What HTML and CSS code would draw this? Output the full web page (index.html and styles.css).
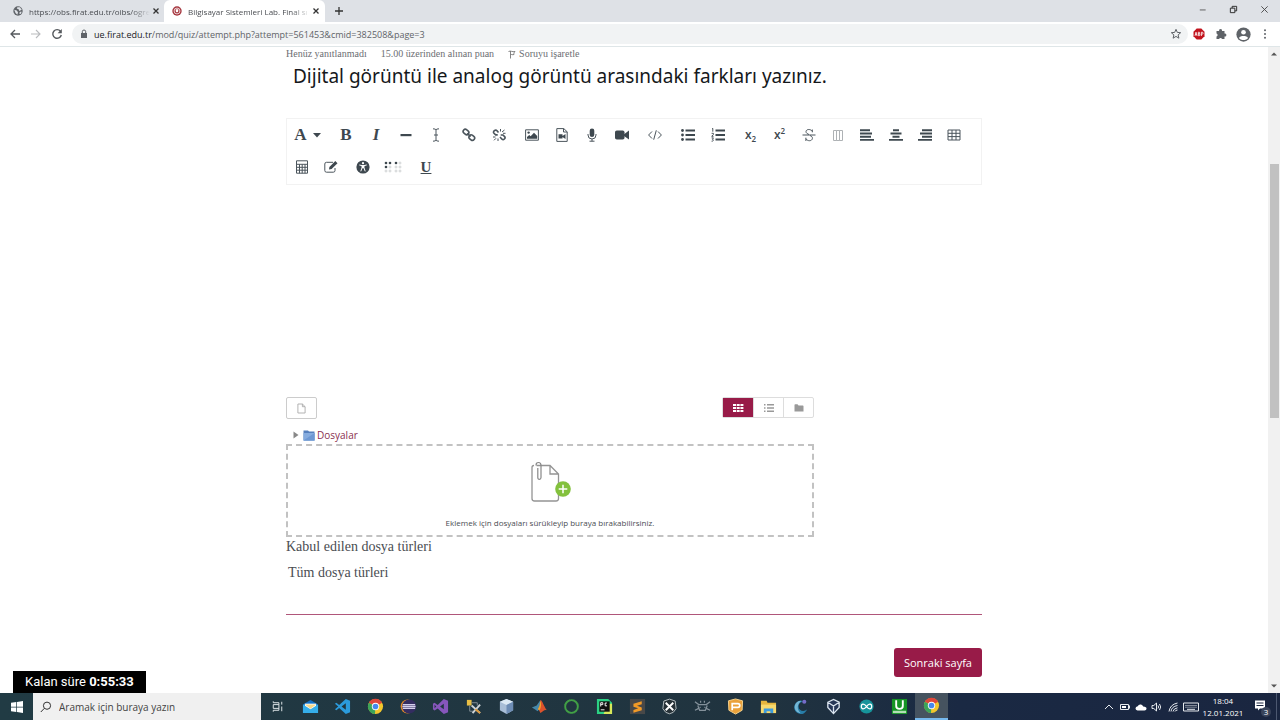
FILE: index.html
```html
<!DOCTYPE html>
<html lang="tr">
<head>
<meta charset="utf-8">
<meta name="viewport" content="width=device-width, initial-scale=1">
<title>Bilgisayar Sistemleri Lab. Final sınavı</title>
<link rel="stylesheet" href="styles.css">
</head>
<body>
<header class="titlebar">
  <div class="tab">
    <svg class="favicon" viewBox="0 0 16 16"><circle cx="8" cy="8" r="7.5" fill="#5f6368"/><path d="M2 6l4 1 2 3-1 4-3-3zM7 2l4 0 3 4-4 2-1-3-3-1zM11 9l3 0-2 4-2-1z" fill="#dee1e6"/></svg>
    <span class="tab-title">https://obs.firat.edu.tr/oibs/ogre</span>
    <button class="tab-close" aria-label="Sekmeyi kapat"><svg viewBox="0 0 8 8"><path d="M1.5 1.5l5 5m0-5l-5 5" stroke="#333" stroke-width="1.3"/></svg></button>
  </div>
  <div class="tab tab-active">
    <svg class="favicon" viewBox="0 0 16 16"><circle cx="8" cy="8" r="7.5" fill="#a63840"/><circle cx="8" cy="8" r="4.7" fill="none" stroke="#fff" stroke-width="1.2"/><path d="M6 5h4v3a2 2 0 0 1-4 0z" fill="#fff"/></svg>
    <span class="tab-title">Bilgisayar Sistemleri Lab. Final sı</span>
    <button class="tab-close" aria-label="Sekmeyi kapat"><svg viewBox="0 0 8 8"><path d="M1.5 1.5l5 5m0-5l-5 5" stroke="#333" stroke-width="1.3"/></svg></button>
  </div>
  <button class="new-tab" aria-label="Yeni sekme"><svg viewBox="0 0 10 10"><path d="M5 1v8M1 5h8" stroke="#333" stroke-width="1.3"/></svg></button>
  <div class="window-buttons">
    <button aria-label="Küçült"><svg viewBox="0 0 10 10"><path d="M2 5.5h6.500" stroke="#555"/></svg></button>
    <button aria-label="Geri yükle"><svg viewBox="0 0 10 10"><path d="M1.500 3.500h5v5h-5zM3.500 3.500v-2h5v5h-2" fill="none" stroke="#222"/></svg></button>
    <button aria-label="Kapat"><svg viewBox="0 0 10 10"><path d="M1.500 1.500l7 7m0-7l-7 7" stroke="#444"/></svg></button>
  </div>
</header>

<nav class="addressbar">
  <button class="nav-button" aria-label="Geri"><svg viewBox="0 0 12 12"><path d="M11 6H2M6 2L2 6l4 4" fill="none" stroke="#55595d" stroke-width="1.3"/></svg></button>
  <button class="nav-button" aria-label="İleri"><svg viewBox="0 0 12 12"><path d="M1 6h9M6 2l4 4-4 4" fill="none" stroke="#b9bbbe" stroke-width="1.1"/></svg></button>
  <button class="nav-button" aria-label="Yenile"><svg viewBox="0 0 12 12"><path d="M9.500 3.300A4.300 4.300 0 1 0 10.300 7" fill="none" stroke="#55595d" stroke-width="1.4"/><path d="M10.800 1v4.200H6.600z" fill="#55595d"/></svg></button>
  <div class="omnibox">
    <svg class="lock" viewBox="0 0 8 10"><path d="M1 4h6v5H1z" fill="#5f6368"/><path d="M2.300 4V2.700a1.700 1.700 0 0 1 3.400 0V4" fill="none" stroke="#5f6368"/></svg>
    <div class="url" role="textbox" aria-label="Adres çubuğu"><span class="url-host">ue.firat.edu.tr</span>/mod/quiz/attempt.php?attempt=561453&amp;cmid=382508&amp;page=3</div>
    <svg class="star" viewBox="0 0 12 12"><path d="M6 1.300l1.300 3.100 3.400.3-2.600 2.200.8 3.300L6 8.400l-2.900 1.800.8-3.300L1.300 4.700l3.400-.3z" fill="none" stroke="#5f6368"/></svg>
  </div>
  <div class="extensions">
    <button aria-label="Adblock Plus"><svg viewBox="0 0 12 12"><path d="M3.700.5h4.600l3.200 3.200v4.600l-3.200 3.200H3.700L.5 8.300V3.700z" fill="#c2131d"/><path d="M2 7.800l1-3.600 1 3.600M2.300 6.700h1.400M5.300 4.200v3.500h.8a.9.9 0 0 0 0-1.800h-.8.700a.8.800 0 0 0 0-1.700zM8.400 8V4.200h.7a1 1 0 0 1 0 2h-.7" fill="none" stroke="#fff" stroke-width=".8"/></svg></button>
    <button aria-label="Uzantılar"><svg viewBox="0 0 12 12"><path d="M1.500 3h2.600a1.500 1.500 0 1 1 2.900 0h2.500v2.500a1.500 1.500 0 1 1 0 2.900V11H7a1.500 1.500 0 0 0-2.900 0H1.500V8.400a1.500 1.500 0 0 0 0-2.900z" fill="#5f6368"/></svg></button>
    <button class="profile" aria-label="Profil"><svg viewBox="0 0 16 16"><circle cx="8" cy="8" r="7.600" fill="#5f6368"/><circle cx="8" cy="5.600" r="2.500" fill="#fff"/><path d="M3.200 11.600c1.200-2.800 8.400-2.800 9.600 0-2 3-7.600 3-9.600 0z" fill="#fff"/></svg></button>
    <button aria-label="Menü"><svg viewBox="0 0 12 12"><g fill="#5f6368"><circle cx="6" cy="2.200" r="1"/><circle cx="6" cy="6" r="1"/><circle cx="6" cy="9.800" r="1"/></g></svg></button>
  </div>
</nav>

<div class="viewport">
  <main class="page">
    <article class="question">
      <div class="question-info">
        <span>Henüz yanıtlanmadı</span>
        <span>15.00 üzerinden alınan puan</span>
        <a class="flag" href="#"><svg viewBox="0 0 8 10"><path d="M2.500 2v7.500M.5 2.500c2.500-1.200 3.500.8 6.500 0-1 .8-1.300 2.200-1 3-1.500.6-2.500-.3-3.500 0" fill="none" stroke="#777" stroke-width=".9"/></svg>Soruyu işaretle</a>
      </div>
      <h1 class="question-text">Dijital görüntü ile analog görüntü arasındaki farkları yazınız.</h1>

      <div class="editor-toolbar" role="toolbar" aria-label="Metin düzenleyici">
        <div class="group style-group"><button aria-label="Paragraf stilleri"><span class="glyph">A</span><svg class="caret" viewBox="0 0 8 5"><path d="M0 0h8L4 4.500z"/></svg></button></div>
        <div class="group">
          <button aria-label="Kalın"><span class="glyph">B</span></button>
          <button aria-label="İtalik"><span class="glyph italic">I</span></button>
          <button aria-label="Yatay çizgi"><svg viewBox="0 0 14 14"><path d="M1.500 6h11v2.200h-11z"/></svg></button>
          <button aria-label="İmleç"><svg viewBox="0 0 14 14"><path d="M4 .8q3 0 3 1.200 0-1.200 3-1.200M7 2v10M4 13.200q3 0 3-1.200 0 1.200 3 1.200M5 7h4" class="line"/></svg></button>
        </div>
        <div class="group">
          <button aria-label="Bağlantı"><svg viewBox="0 0 14 14"><g class="line bold"><rect x="1" y="1.800" width="6" height="4.400" rx="2.200" transform="rotate(40 4 4)"/><rect x="6.800" y="7.400" width="6" height="4.400" rx="2.200" transform="rotate(40 9.800 9.600)"/><path d="M5.200 5.200l3.400 3.400"/></g></svg></button>
          <button aria-label="Bağlantıyı kaldır"><svg viewBox="0 0 14 14"><path d="M6.500 4.500L5 2.700C3.500 1 .5 3.500 2 5.300l1.700 1.600h2M8 9l2 2.200c1.500 1.400 4-1 2.600-2.600L11 7H8.700" class="line bold"/><path d="M8.500 1v2.500M10 4l2.500-2M11 5.300h2.500M1 9h2.500M2 12.300l2-2M6 10.500V13" class="line thin"/></svg></button>
        </div>
        <div class="group">
          <button aria-label="Resim"><svg viewBox="0 0 14 14"><path d="M.6 1.800h12.800v10.400H.6z" class="line"/><path d="M2 10.800V8.900l2.200-2 1.500 1.400L9 4.800l3.200 3.200v2.800z"/><circle cx="3.600" cy="4.600" r="1.200"/></svg></button>
          <button aria-label="Medya"><svg viewBox="0 0 14 14"><path d="M1.800.6h7l3.400 3.200v9.600H1.800zM8.500.6V4h3.700" class="line"/><path d="M3.500 6.200h4v4.300h-4zM7.500 8l3-2v5l-3-2z"/></svg></button>
          <button aria-label="Ses kaydet"><svg viewBox="0 0 14 14"><rect x="4.700" y=".5" width="4.600" height="8.500" rx="2.300"/><path d="M3 6v1a4 4 0 0 0 8 0V6M7 11v2.300M4.500 13.200h5" class="line"/></svg></button>
          <button aria-label="Video kaydet"><svg viewBox="0 0 14 14"><rect x="0" y="2.500" width="9.500" height="9" rx="1.800"/><path d="M9 6.200l5-3.600v9L9 8z"/></svg></button>
        </div>
        <div class="group"><button aria-label="HTML"><svg viewBox="0 0 14 14"><path d="M4 3.500L.6 7 4 10.500M10 3.500L13.400 7 10 10.500M8.300 2.300l-2.600 9.400" class="line"/></svg></button></div>
        <div class="group">
          <button aria-label="Madde listesi"><svg viewBox="0 0 14 14"><circle cx="1.500" cy="2.500" r="1.400"/><circle cx="1.500" cy="7" r="1.400"/><circle cx="1.500" cy="11.500" r="1.400"/><path d="M4.500 1.600H14v1.800H4.500zM4.500 6.100H14v1.800H4.500zM4.500 10.600H14v1.800H4.500z"/></svg></button>
          <button aria-label="Numaralı liste"><svg viewBox="0 0 14 14"><path d="M1 .8l.8-.4v3.300M.6 5.300h1.800v1.200L.7 8.300h1.800M.6 9.900h1.800L1.500 11.400c1.400 0 1.200 2-.9 1.800" class="line thin"/><path d="M4.500 1.600H14v1.800H4.500zM4.500 6.100H14v1.800H4.500zM4.500 10.600H14v1.800H4.500z"/></svg></button>
        </div>
        <div class="group compact">
          <button aria-label="Alt simge"><span class="script">x<sub>2</sub></span></button>
          <button aria-label="Üst simge"><span class="script">x<sup>2</sup></span></button>
          <button aria-label="Üstü çizili"><svg viewBox="0 0 14 14"><path d="M10.300 4.300V1.500M10.200 3.300C9 1 4.300.7 4 3.600c0 1.500 1.500 2.300 3 2.900M8 7.500c1.600.7 2.600 1.500 2.400 3-.6 3-5 2.800-6.400.3M3.900 9.700V13M.5 7h13" class="line"/></svg></button>
          <button aria-label="Sütunlar"><svg viewBox="0 0 14 14"><path d="M2.500 2.500h3v10h-3zM5.500 2.500h3v10h-3zM8.500 2.500h3v10h-3z" class="line pale"/></svg></button>
          <button aria-label="Sola hizala"><svg viewBox="0 0 14 14"><path d="M0 1.300h10v2H0zM0 4.500h12v2H0zM0 7.700h11v2H0zM0 10.900h14v1.800H0z"/></svg></button>
          <button aria-label="Ortala"><svg viewBox="0 0 14 14"><path d="M4 1.300h6v2H4zM1.500 4.500h11v2h-11zM3.500 7.700h7v2h-7zM0 10.900h14v1.800H0z"/></svg></button>
          <button aria-label="Sağa hizala"><svg viewBox="0 0 14 14"><path d="M4 1.300h10v2H4zM2 4.500h12v2H2zM4 7.700h10v2H4zM0 10.900h14v1.800H0z"/></svg></button>
          <button aria-label="Tablo"><svg viewBox="0 0 14 14"><path d="M1 2h12v10H1zM1 5.300h12M1 8.600h12M5 2v10M9 2v10" class="line"/></svg></button>
        </div>
        <div class="group compact">
          <button aria-label="Denklem"><svg viewBox="0 0 14 14"><path d="M1.500.8h11v12.400h-11zM1.500 4.300h11M1.500 7.300h11M1.500 10.200h11M4.500 4.300v9M7.200 4.300v9M10 4.300v9" class="line"/></svg></button>
          <button aria-label="Düzenle"><svg viewBox="0 0 14 14"><path d="M11 8v2.500q0 1.700-1.700 1.700H2.500Q.8 12.200.8 10.500V4q0-1.700 1.700-1.700H9" class="line"/><path d="M5 9.500l.4-2.600L11.300 1l2.200 2.200-5.900 5.900z"/></svg></button>
        </div>
        <div class="group">
          <button aria-label="Erişilebilirlik denetimi"><svg viewBox="0 0 14 14"><circle cx="7" cy="7" r="6.600"/><circle cx="7" cy="3.200" r="1.100" fill="#fff"/><path d="M3.300 5l2.700.6v2.200l-1.200 3.500M10.700 5L8 5.600v2.200l1.200 3.500M6 5.600h2" fill="none" stroke="#fff"/><path d="M6 5.300h2v3H6z" fill="#fff"/></svg></button>
          <button aria-label="Ekran okuyucu"><svg class="wide" viewBox="0 0 18 14"><circle cx="2" cy="3" r="1.300"/><circle cx="6" cy="3" r="1.300"/><circle cx="2" cy="7" r="1.300"/><circle cx="12" cy="3" r="1.300"/><g fill="none" stroke="#b9bdc0" stroke-width=".6"><circle cx="6" cy="7" r="1"/><circle cx="2" cy="11" r="1"/><circle cx="6" cy="11" r="1"/><circle cx="16" cy="3" r="1"/><circle cx="12" cy="7" r="1"/><circle cx="16" cy="7" r="1"/><circle cx="12" cy="11" r="1"/><circle cx="16" cy="11" r="1"/></g></svg></button>
        </div>
        <div class="group"><button aria-label="Altı çizili"><span class="glyph underline">U</span></button></div>
      </div>
      <textarea class="answer" aria-label="Yanıt metni"></textarea>

      <section class="file-manager" aria-label="Dosyalar">
        <div class="file-toolbar">
          <button class="add-file" aria-label="Dosya ekle"><svg viewBox="0 0 10 12"><path d="M1 1h5l3 3v7H1zM6 1v3h3" fill="none" stroke="#aaa"/></svg></button>
          <div class="view-switch">
            <button class="selected" aria-label="Simge görünümü"><svg viewBox="0 0 12 10"><path d="M1 1h3v2H1zM4.700 1h3v2h-3zM8.400 1h3v2h-3zM1 4h3v2H1zM4.700 4h3v2h-3zM8.400 4h3v2h-3zM1 7h3v2H1zM4.700 7h3v2h-3zM8.400 7h3v2h-3z" fill="#fff"/></svg></button>
            <button aria-label="Liste görünümü"><svg viewBox="0 0 12 10"><path d="M1 1h1.500v1.500H1zM1 4.200h1.500v1.500H1zM1 7.400h1.500v1.500H1zM4 1h7v1.500H4zM4 4.200h7v1.500H4zM4 7.400h7v1.500H4z" fill="#999"/></svg></button>
            <button aria-label="Ağaç görünümü"><svg viewBox="0 0 12 10"><path d="M1.500 2q0-.7.7-.7h2.300l1 1.200h4.300q.7 0 .7.700v5.300h-9z" fill="#999"/></svg></button>
          </div>
        </div>
        <div class="path">
          <svg class="arrow" viewBox="0 0 6 8"><path d="M.5.500L5.500 4 .5 7.500z" fill="#888"/></svg>
          <svg class="folder" viewBox="0 0 12 12"><path d="M.5 1.500H5l1 1h5.500v9H.5z" fill="#5680bd"/><path d="M.5 4h11v7.500H.5z" fill="#86acdf"/><path d="M.5 11.500L11.500 4v7.500z" fill="#6d98d4"/></svg>
          <a href="#">Dosyalar</a>
        </div>
        <div class="dropzone">
          <svg class="drop-icon" viewBox="0 0 42 42"><path d="M7.500 4.500H21L29.500 13v24.500q0 2.500-2.500 2.500H5.500Q3 40 3 37.500v-31q0-2 2-2M21 4.500V13h8.500" fill="none" stroke="#949494" stroke-width="1.300"/><path d="M7 4.500q0-3 2.500-3T12 4.500v12q0 1.800-1.600 1.800T8.800 16.500V7" fill="none" stroke="#888" stroke-width="1.200"/><circle cx="34" cy="28" r="7.800" fill="#83c13d"/><path d="M34 23.700v8.600M29.700 28h8.600" stroke="#fff" stroke-width="1.500"/></svg>
          <p>Eklemek için dosyaları sürükleyip buraya bırakabilirsiniz.</p>
        </div>
      </section>
      <div class="accepted">
        <p>Kabul edilen dosya türleri</p>
        <p class="all-types">Tüm dosya türleri</p>
      </div>
      <div class="submit-row"><button class="next">Sonraki sayfa</button></div>
    </article>
  </main>
  <div class="scrollbar" aria-hidden="true">
    <svg viewBox="0 0 8 6"><path d="M1 4.500h6L4 1.500z" fill="#555"/></svg>
    <div class="track"><div class="thumb"></div></div>
    <svg viewBox="0 0 8 6"><path d="M1 1.500h6L4 4.500z" fill="#555"/></svg>
  </div>
  <div class="timer">Kalan süre <strong>0:55:33</strong></div>
</div>

<footer class="taskbar">
  <button class="start" aria-label="Başlat"><svg viewBox="0 0 12 12"><path d="M0 1.800l5.300-.8v4.700H0zM6 .9L12 0v5.700H6zM0 6.400h5.300v4.700L0 10.300zM6 6.400h6V12l-6-.9z" fill="#fff"/></svg></button>
  <label class="search">
    <svg viewBox="0 0 12 12"><circle cx="7" cy="4.700" r="3.600" fill="none" stroke="#333"/><path d="M4.300 7.400L.8 11" stroke="#333"/></svg>
    <input type="text" placeholder="Aramak için buraya yazın" aria-label="Arama">
  </label>
  <div class="apps">
    <button aria-label="Görev görünümü"><svg viewBox="0 0 18 18"><path d="M4.500 5h6v2M4.500 13h6v-2M4.500 7v4h6V7zM4.500 3.500V5M4.500 13v1.500M13.500 4v3M13.500 9v5" fill="none" stroke="#e8eef0"/></svg></button>
    <button aria-label="Posta"><svg viewBox="0 0 18 18"><path d="M1 7l8-5 8 5v9H1z" fill="#1170c8"/><path d="M3 6h12v8H3z" fill="#fff"/><path d="M1 7l8 5 8-5v9H1z" fill="#35aeea"/><path d="M3 7h12l-6 4.500z" fill="#f4d88c"/></svg></button>
    <button aria-label="Visual Studio Code"><svg viewBox="0 0 18 18"><path d="M12.500 1L17 3v12l-4.500 2L5.500 10.500 2.500 13 1 12l3.500-3L1 6l1.500-1 3 2.500z" fill="#2b9bdc"/><path d="M12.500 5.500V12.500L8 9z" fill="#20363f"/></svg></button>
    <button aria-label="Chrome"><svg viewBox="0 0 18 18"><circle cx="9" cy="9" r="8" fill="#f3c72c"/><path d="M9 9L2 5A8 8 0 0 1 16 5z" fill="#df473b"/><path d="M9 9L2 5a8 8 0 0 0 6.500 12z" fill="#3ba45a"/><circle cx="9" cy="9" r="3.900" fill="#fff"/><circle cx="9" cy="9" r="3" fill="#4688ed"/></svg></button>
    <button aria-label="Eclipse"><svg viewBox="0 0 18 18"><circle cx="8" cy="9" r="7.300" fill="#e68b28"/><circle cx="9.700" cy="9" r="7.500" fill="#342d61"/><path d="M3 7h13M2.500 9h14M3 11h13" stroke="#d4cfeb" stroke-width="1.400"/></svg></button>
    <button aria-label="Visual Studio"><svg viewBox="0 0 18 18"><path d="M12.500 1L17 3v12l-4.500 2L6 11l-3.300 2.300L1 12V6l1.700-1L6 7.500zM2.700 7.200v3.600L4.500 9zM12.500 6v6L8.500 9z" fill="#8756bc" fill-rule="evenodd"/></svg></button>
    <button aria-label="SQL Server"><svg viewBox="0 0 18 18"><path d="M2 2h5v6H2z" fill="#e9bf44"/><path d="M7 5h6v3M5 8v6h5" stroke="#879097" fill="none"/><path d="M7 8l9 8M16 7l-8 9" stroke="#ced3d7" stroke-width="2"/><path d="M11 12l5 4" stroke="#db9a3d" stroke-width="2"/></svg></button>
    <button aria-label="VirtualBox"><svg viewBox="0 0 18 18"><path d="M9 1l7 3v9l-7 4-7-4V4z" fill="#a8bdd6"/><path d="M9 1l7 3-7 3.500L2 4z" fill="#dce9f4"/><path d="M9 7.500L16 4v9l-7 4z" fill="#6e8db5"/></svg></button>
    <button aria-label="MATLAB"><svg viewBox="0 0 18 18"><path d="M1 10l5-2 4-6 1 7-4 5-3-2z" fill="#4689ac"/><path d="M10 2c2 0 4 8 7 11-3-1-4 1-7 3l-2-4c2-3 1-6 2-10z" fill="#dc522c"/><path d="M10 3c1 3 1 7-1 10l-2-1c3-4 2-6 3-9z" fill="#f0a22d"/></svg></button>
    <button aria-label="Anaconda"><svg viewBox="0 0 18 18"><circle cx="9" cy="9" r="6.700" fill="none" stroke="#43a047" stroke-width="2"/><circle cx="9" cy="9" r="7.500" fill="none" stroke="#358c3b" stroke-dasharray="1 1.500"/></svg></button>
    <button aria-label="PyCharm"><svg viewBox="0 0 18 18"><path d="M1 1h12l4 4v12H1z" fill="#2bd184"/><path d="M13 6h4v11H8z" fill="#d8e75a"/><path d="M3.500 3.500h11v11h-11z" fill="#111"/><path d="M5 9V5h2.200v2H5M11.500 5.300H9.700v3h2M5 12.500h4" fill="none" stroke="#fff"/></svg></button>
    <button aria-label="Sublime Text"><svg viewBox="0 0 18 18"><path d="M1 1h16v16H1z" fill="#484848"/><path d="M13.500 3.500v3.200L8.500 8.300l5 1.700v3L4.700 15.600v-3l5-1.700-5-1.700V6.200z" fill="#f29a27"/></svg></button>
    <button aria-label="Xilinx"><svg viewBox="0 0 18 18"><path d="M9 1.200l6 2 1 8-3 4-4 1.500-4-1.500-3-4 1-8z" fill="#263137" stroke="#bac2c5"/><path d="M5 5l8 8M13 5l-8 8" stroke="#fff" stroke-width="2"/></svg></button>
    <button aria-label="Robot"><svg viewBox="0 0 18 18"><path d="M1 4l4 3h8l4-3M1 13l4-2M17 13l-4-2M4 8l2 5h6l2-5M6 10h1M11 10h1M7 5V3M11 5V3" fill="none" stroke="#84919b" stroke-width="1.300"/></svg></button>
    <button aria-label="Proteus"><svg viewBox="0 0 18 18"><path d="M1.500 3L9 1l7.500 2-.5 10-7 4-7-4z" fill="#eaa13a" stroke="#f8d48e"/><path d="M5.500 13V6h6q2 0 2 2t-2 2h-6" fill="none" stroke="#fff" stroke-width="1.800"/></svg></button>
    <button aria-label="Dosya Gezgini"><svg viewBox="0 0 18 18"><path d="M1 3h6l1 2h9v11H1z" fill="#e5b63f"/><path d="M1 7h16v9H1z" fill="#f6d96e"/><path d="M4 16v-5h10v5h-3v-2H7v2z" fill="#3d9bdc"/></svg></button>
    <button aria-label="Cisco"><svg viewBox="0 0 18 18"><path d="M10 3a7 7 0 1 0 6 9c-3 3-9 2-9-3 0-3 1-4 4-5z" fill="#287da8"/><path d="M10 3a7 7 0 0 0-7 5c-1 5 3 8 6 8-4-4-4-9 1-13z" fill="#73b6d5"/><circle cx="13" cy="4" r="2.200" fill="#756cca"/></svg></button>
    <button aria-label="Sanal makine"><svg viewBox="0 0 18 18"><path d="M3 4v6l6 6 6-6V4L9 1.500z" fill="#253657"/><path d="M3 4.500l6-3 6 3v5.500l-6 6.500L3 10zM3 4.500l6 4 6-4M9 8.500v8" fill="none" stroke="#dbe5ef" stroke-width="1.400"/></svg></button>
    <button aria-label="Arduino"><svg viewBox="0 0 18 18"><circle cx="9" cy="9" r="7.500" fill="#16949b"/><path d="M9 9C6.500 5.500 3.500 6 3.500 9s3 3.500 5.500 0 5.500-3 5.500 0-3 3.500-5.500 0z" fill="none" stroke="#fff" stroke-width="1.300"/></svg></button>
    <button aria-label="Uyumsoft"><svg viewBox="0 0 18 18"><path d="M1 1h16v16H1z" fill="#159425"/><path d="M5.500 2.500v6q0 3 3.500 3t3.500-3v-6" fill="none" stroke="#fff" stroke-width="2"/><path d="M2 13.500h14v2.500H2z" fill="#b2dfb5"/></svg></button>
    <button class="running" aria-label="Chrome, açık"><svg viewBox="0 0 18 18"><circle cx="9" cy="9" r="8" fill="#f3c72c"/><path d="M9 9L2 5A8 8 0 0 1 16 5z" fill="#df473b"/><path d="M9 9L2 5a8 8 0 0 0 6.500 12z" fill="#3ba45a"/><circle cx="9" cy="9" r="3.900" fill="#fff"/><circle cx="9" cy="9" r="3" fill="#4688ed"/></svg></button>
  </div>
  <div class="tray">
    <svg viewBox="0 0 12 12"><path d="M2 8l4-4 4 4" class="tray-line"/></svg>
    <svg viewBox="0 0 12 12"><path d="M1.500 3.500h8v5h-8zM10.500 4.500v3" class="tray-line"/><path d="M3 5h4v2H3z" fill="#fff"/></svg>
    <svg viewBox="0 0 12 12"><path d="M2.500 9.500q-2-.5-2-2 0-2 2.200-2.200 1-2.300 3.300-1.800 1.600.3 2.200 2 3.500.2 3.300 2.300 0 1.700-2 1.700z" fill="#fff"/></svg>
    <svg viewBox="0 0 12 12"><path d="M1 4.500h1.800L5.500 2v8L2.800 7.500H1zM7 4.500q1.200 1.500 0 3M8.500 3q2.300 3 0 6" class="tray-line"/></svg>
    <svg viewBox="0 0 12 12"><path d="M2 10.500q1-7 8.500-8.500M4 10.500q.5-5 6.500-6M6 10.500q.5-3 4.500-3.700M8 10.500q.3-1.300 2.500-1.500" class="tray-line"/></svg>
    <svg class="keyboard" viewBox="0 0 16 12"><path d="M.5 2h15v8H.5z" class="tray-line"/><path d="M2.500 4.500h11M2.500 6.200h11" class="tray-line" stroke-dasharray="1 1"/><path d="M4 8.300h8" class="tray-line"/></svg>
  </div>
  <div class="clock"><time>18:04</time><time>12.01.2021</time></div>
  <button class="notifications" aria-label="Bildirimler"><svg viewBox="0 0 16 16"><path d="M1 1.500h10v8H6l-2 2v-2H1z" fill="#fff"/><path d="M2.500 4h7M2.500 6.500h7" stroke="#1a2640"/></svg><span class="badge">3</span></button>
</footer>
</body>
</html>
```

FILE: styles.css
```css
* { box-sizing: border-box; }

body {
  margin: 0;
  height: 100vh;
  display: flex;
  flex-direction: column;
  overflow: hidden;
  background: #fff;
  color: #4a4d52;
  font-family: "Open Sans", "Noto Sans", sans-serif;
  font-size: 8px;
}

button {
  display: flex;
  align-items: center;
  justify-content: center;
  padding: 0;
  border: 0;
  background: none;
  color: inherit;
  font: inherit;
}

p, h1 { margin: 0; font-weight: 400; }
svg { display: block; flex: none; }

/* Browser frame */
.titlebar {
  display: flex;
  flex: none;
  height: 22px;
  background: #dee1e6;
}

.tab {
  display: flex;
  align-items: center;
  gap: 2px;
  width: 164px;
  padding: 0 5px 0 13px;
}

.tab-active {
  width: 161px;
  padding-left: 8px;
  background: #fff;
  border-radius: 6px 6px 0 0;
}

.favicon { width: 10px; height: 10px; margin-right: 4px; }

.tab-title {
  flex: 1;
  white-space: nowrap;
  -webkit-mask-image: linear-gradient(90deg, #000 85%, transparent);
  mask-image: linear-gradient(90deg, #000 85%, transparent);
}

.tab-close svg { width: 8px; height: 8px; }
.new-tab { width: 28px; }
.new-tab svg { width: 10px; height: 10px; }
.window-buttons { display: flex; margin-left: auto; }
.window-buttons button { width: 31px; padding-bottom: 3px; }
.window-buttons svg { width: 9px; height: 9px; }

.addressbar {
  display: flex;
  align-items: center;
  flex: none;
  height: 25px;
  padding: 0 4px;
  border-bottom: 1px solid #dfe6e8;
}

.nav-button { width: 21px; }
.nav-button svg { width: 12px; height: 12px; }

.omnibox {
  display: flex;
  align-items: center;
  flex: 1;
  height: 20px;
  margin-left: 5px;
  padding: 0 6px 0 8px;
  border-radius: 10px;
  background: #f1f3f4;
}

.lock { width: 8px; height: 10px; }
.url { flex: 1; margin-left: 6px; color: #5f6368; font-size: 9px; white-space: nowrap; }
.url-host { color: #202124; }
.star { width: 12px; height: 12px; }
.extensions { display: flex; align-items: center; }
.extensions button { width: 22px; }
.extensions svg { width: 12px; height: 12px; }
.extensions .profile svg { width: 15px; height: 15px; }

/* Page */
.viewport {
  position: relative;
  display: flex;
  flex: 1;
  min-height: 0;
}

.page { flex: 1; overflow: hidden; }

.question {
  max-width: 696px;
  margin: 0 auto;
}

.question-info {
  display: flex;
  gap: 14px;
  height: 14px;
  color: #6b6e73;
  font: 10px/14px "Liberation Serif", serif;
}

.flag {
  display: flex;
  align-items: center;
  gap: 3px;
  color: inherit;
  text-decoration: none;
}

.flag svg { width: 8px; height: 10px; }

.question-text {
  padding: 2px 7px 0;
  color: #15181b;
  font: 19px/26px "Noto Sans", "Open Sans", sans-serif;
}

.editor-toolbar {
  display: flex;
  flex-wrap: wrap;
  column-gap: 3px;
  margin-top: 29px;
  padding-bottom: 1px;
  border: 1px solid #f2f2f2;
}

.group { display: flex; height: 32px; }
.group button { width: 30px; color: #3e484f; }
.group.compact button { width: 29px; }
.group svg { width: 14px; height: 14px; fill: #3e484f; }
.group .wide { width: 18px; }
.style-group button { width: 41px; gap: 6px; }
.group .caret { width: 8px; height: 5px; }
.group .line { fill: none; stroke: #4b555c; stroke-width: 1; }
.group .bold { stroke-width: 1.6; }
.group .thin { stroke-width: 1; }
.group .pale { stroke: #aeb2b5; }
.glyph { font: bold 17px/20px "Liberation Serif", serif; }
.italic { font-style: italic; }
.underline { font-size: 15px; text-decoration: underline; }
.script { font-size: 12px; font-weight: 600; line-height: 16px; }
.script sub, .script sup { font-size: 8px; line-height: 0; }

.answer {
  display: block;
  width: 100%;
  height: 212px;
  padding: 8px;
  border: 0;
  outline: 0;
  resize: none;
  background: transparent;
}

.file-manager { max-width: 528px; }

.file-toolbar {
  display: flex;
  justify-content: space-between;
}

.add-file {
  width: 31px;
  height: 22px;
  border: 1px solid #ccc;
  border-radius: 2px;
}

.add-file svg { width: 9px; height: 11px; }

.view-switch {
  display: flex;
  height: 21px;
  border: 1px solid #ddd;
  border-radius: 2px;
}

.view-switch button { width: 30px; }
.view-switch button + button { border-left: 1px solid #ddd; }
.view-switch .selected { background: #981b48; }
.view-switch svg { width: 12px; height: 10px; }

.path {
  display: flex;
  align-items: center;
  height: 25px;
  padding: 6px 7px 0;
  font-size: 10px;
}

.path a { color: #8b2f50; text-decoration: none; }
.arrow { width: 6px; height: 8px; }
.folder { width: 12px; height: 12px; margin: 0 2px 0 4px; }

.dropzone {
  display: flex;
  flex-direction: column;
  align-items: center;
  justify-content: space-between;
  height: 93px;
  padding: 15px 8px 5px;
  border: 2px dashed #c2c2c2;
  line-height: 14px;
}

.drop-icon { width: 42px; height: 42px; }

.accepted {
  padding-bottom: 29px;
  border-bottom: 1px solid #b0567a;
  font: 14px/20px "Liberation Serif", serif;
}

.all-types { padding: 6px 2px 2px; }

.submit-row {
  display: flex;
  justify-content: flex-end;
  padding-top: 33px;
}

.next {
  height: 29px;
  padding: 0 10px;
  border-radius: 3px;
  background: #981b48;
  color: #fff;
  font-size: 11px;
}

.scrollbar {
  display: flex;
  flex-direction: column;
  align-items: center;
  width: 12px;
  padding: 4px 0;
  background: #f1f1f1;
}

.scrollbar svg { width: 8px; height: 6px; }
.track { flex: 1; width: 9px; padding-top: 107px; }
.thumb { height: 49%; background: #c1c1c1; }

.timer {
  position: absolute;
  bottom: 0;
  left: 13px;
  padding: 0 12px;
  background: #000;
  color: #fff;
  font: 13px/22px Roboto, sans-serif;
}

/* Taskbar */
.taskbar {
  display: flex;
  flex: none;
  height: 27px;
  background: linear-gradient(90deg, #213b44, #20333f 60%, #1a2943 75%, #1a2640);
  color: #fff;
}

.start { width: 33px; }
.start svg { width: 12px; height: 12px; }

.search {
  display: flex;
  align-items: center;
  gap: 7px;
  width: 228px;
  padding: 0 7px;
  background: #f0f0f0;
}

.search svg { width: 12px; height: 12px; }

.search input {
  flex: 1;
  min-width: 0;
  padding: 0;
  border: 0;
  outline: 0;
  background: none;
  font: 10px/16px "Open Sans", sans-serif;
}

.search input::placeholder { color: #444; opacity: 1; }
.apps { display: flex; flex: 0 1 687px; min-width: 0; }
.apps button { flex: 1; min-width: 0; }
.apps svg { width: 17px; height: 17px; }
.running { border-bottom: 2px solid #76b9ed; }
.apps .running { background: #46535f; }

.tray {
  display: flex;
  align-items: center;
  gap: 4px;
  margin-left: auto;
}

.tray svg { width: 12px; height: 12px; }
.tray .keyboard { width: 16px; }
.tray-line { fill: none; stroke: #e6eaee; stroke-width: 1; }

.clock {
  display: flex;
  flex-direction: column;
  align-items: center;
  justify-content: center;
  width: 48px;
  line-height: 12px;
}

.notifications {
  position: relative;
  width: 30px;
  margin-right: 3px;
  border-right: 1px solid #4c5870;
}

.notifications svg { width: 16px; height: 16px; }

.badge {
  position: absolute;
  right: 5px;
  bottom: 3px;
  width: 10px;
  border-radius: 5px;
  background: #39445a;
  line-height: 10px;
}
```
